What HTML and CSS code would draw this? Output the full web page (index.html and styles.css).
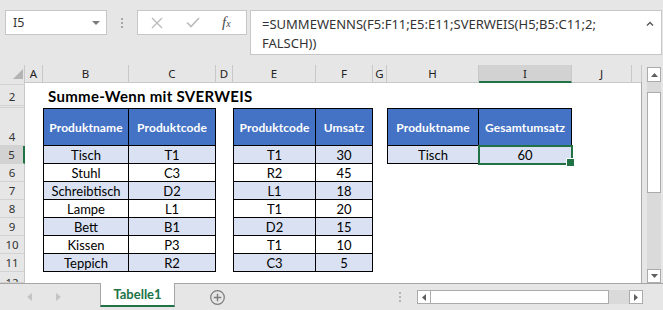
FILE: index.html
```html
<!DOCTYPE html>
<html lang="de">
<head>
<meta charset="utf-8">
<link rel="stylesheet" href="styles.css">
</head>
<body>
<div class="app">
  <header class="topbar">
    <div class="namebox">
      <span class="nb-text">I5</span>
      <svg class="nb-drop" width="8" height="4" viewBox="0 0 8 4"><path d="M0 0h8L4 4z" fill="#7a7a7a"/></svg>
    </div>
    <div class="grip"><i></i><i></i><i></i></div>
    <div class="fbtns">
      <svg class="fb-x" width="12" height="12" viewBox="0 0 12 12"><path d="M1 1L11 11M11 1L1 11" stroke="#bcbcbc" stroke-width="1.4" fill="none"/></svg>
      <svg class="fb-ok" width="14" height="11" viewBox="0 0 14 11"><path d="M1 5.5L5 9.5L13 1" stroke="#bcbcbc" stroke-width="1.6" fill="none"/></svg>
      <span class="fx"><i>f</i><i class="fx-x">x</i></span>
    </div>
    <div class="formula">
      <div class="ftext">=SUMMEWENNS(F5:F11;E5:E11;SVERWEIS(H5;B5:C11;2;<br>FALSCH))</div>
      <svg class="fcaret" width="8" height="5" viewBox="0 0 8 5"><path d="M1 4.5L4 1.5L7 4.5" stroke="#555" stroke-width="1.4" fill="none"/></svg>
    </div>
  </header>

  <div class="main">
    <div class="sheet">
      <div class="row r-h">
        <div class="ch corner"><svg width="25" height="17" viewBox="0 0 25 17"><path d="M13 14H23V4z" fill="#b4b4b4"/></svg></div>
        <div class="ch">A</div><div class="ch">B</div><div class="ch">C</div><div class="ch">D</div><div class="ch">E</div><div class="ch">F</div><div class="ch">G</div><div class="ch">H</div><div class="ch on">I</div><div class="ch">J</div><div class="ch"></div>
      </div>
      <div class="row r1">
        <div class="rh"></div><div></div><div></div><div></div><div></div><div></div><div></div><div></div><div></div><div></div><div></div><div></div>
      </div>
      <div class="row r2">
        <div class="rh">2</div><div></div><div class="title">Summe-Wenn mit SVERWEIS</div><div></div><div></div><div></div><div></div><div></div><div></div><div></div><div></div><div></div>
      </div>
      <div class="row r3">
        <div class="rh"></div><div></div><div></div><div></div><div></div><div></div><div></div><div></div><div></div><div></div><div></div><div></div>
      </div>
      <div class="row r4">
        <div class="rh">4</div><div></div>
        <div class="c h l">Produktname</div><div class="c h">Produktcode</div><div></div>
        <div class="c h l">Produktcode</div><div class="c h">Umsatz</div><div></div>
        <div class="c h l">Produktname</div><div class="c h">Gesamtumsatz</div><div></div><div></div>
      </div>
      <div class="row rd">
        <div class="rh on">5</div><div></div>
        <div class="c a l">Tisch</div><div class="c a">T1</div><div></div>
        <div class="c a l">T1</div><div class="c a">30</div><div></div>
        <div class="c a l">Tisch</div><div class="c a sel">60</div><div></div><div></div>
      </div>
      <div class="row rd">
        <div class="rh">6</div><div></div>
        <div class="c l">Stuhl</div><div class="c">C3</div><div></div>
        <div class="c l">R2</div><div class="c">45</div><div></div>
        <div></div><div></div><div></div><div></div>
      </div>
      <div class="row rd">
        <div class="rh">7</div><div></div>
        <div class="c a l">Schreibtisch</div><div class="c a">D2</div><div></div>
        <div class="c a l">L1</div><div class="c a">18</div><div></div>
        <div></div><div></div><div></div><div></div>
      </div>
      <div class="row rd">
        <div class="rh">8</div><div></div>
        <div class="c l">Lampe</div><div class="c">L1</div><div></div>
        <div class="c l">T1</div><div class="c">20</div><div></div>
        <div></div><div></div><div></div><div></div>
      </div>
      <div class="row rd">
        <div class="rh">9</div><div></div>
        <div class="c a l">Bett</div><div class="c a">B1</div><div></div>
        <div class="c a l">D2</div><div class="c a">15</div><div></div>
        <div></div><div></div><div></div><div></div>
      </div>
      <div class="row rd">
        <div class="rh">10</div><div></div>
        <div class="c l">Kissen</div><div class="c">P3</div><div></div>
        <div class="c l">T1</div><div class="c">10</div><div></div>
        <div></div><div></div><div></div><div></div>
      </div>
      <div class="row rd">
        <div class="rh">11</div><div></div>
        <div class="c a l">Teppich</div><div class="c a">R2</div><div></div>
        <div class="c a l">C3</div><div class="c a">5</div><div></div>
        <div></div><div></div><div></div><div></div>
      </div>
      <div class="row r12">
        <div class="rh top">12</div><div></div><div></div><div></div><div></div><div></div><div></div><div></div><div></div><div></div><div></div><div></div>
      </div>
    </div>

    <div class="vscroll">
      <div class="sb-btn up"><svg width="7" height="4" viewBox="0 0 7 4"><path d="M0 4h7L3.5 0z" fill="#5f5f5f"/></svg></div>
      <div class="sb-track"><div class="sb-thumb"></div></div>
      <div class="sb-btn down"><svg width="7" height="4" viewBox="0 0 7 4"><path d="M0 0h7L3.5 4z" fill="#5f5f5f"/></svg></div>
    </div>
  </div>

  <footer class="tabbar">
    <div class="nav">
      <svg class="nav-l" width="5" height="8" viewBox="0 0 5 8"><path d="M5 0V8L0 4z" fill="#c4c4c4"/></svg>
      <svg class="nav-r" width="5" height="8" viewBox="0 0 5 8"><path d="M0 0V8L5 4z" fill="#c4c4c4"/></svg>
    </div>
    <div class="tab">Tabelle1</div>
    <svg class="plus" width="15" height="15" viewBox="0 0 15 15"><circle cx="7.5" cy="7.5" r="6.8" fill="none" stroke="#7b7b7b" stroke-width="1.2"/><path d="M7.5 3.8V11.2M3.8 7.5H11.2" stroke="#7b7b7b" stroke-width="1.4"/></svg>
    <div class="grip tgrip"><i></i><i></i><i></i></div>
    <div class="hscroll">
      <div class="hb"><svg width="4" height="7" viewBox="0 0 4 7"><path d="M4 0V7L0 3.5z" fill="#5f5f5f"/></svg></div>
      <div class="hthumb"></div>
      <div class="htrack"></div>
      <div class="hb"><svg width="4" height="7" viewBox="0 0 4 7"><path d="M0 0V7L4 3.5z" fill="#5f5f5f"/></svg></div>
    </div>
  </footer>
</div>
</body>
</html>
```

FILE: styles.css
```css
* { box-sizing: border-box; margin: 0; padding: 0; }
html, body { width: 663px; height: 310px; overflow: hidden; }
body { background: #e6e6e6; font-family: Lato, "Liberation Sans", sans-serif; color: #000; }

.app { display: flex; flex-direction: column; width: 663px; height: 310px; }

/* top formula bar */
.topbar { height: 65px; display: flex; align-items: flex-start; padding-top: 10px; background: #e6e6e6; }
.namebox {
  margin-left: 5px; width: 102px; height: 25px; background: #fff; border: 1px solid #c6c6c6;
  display: flex; align-items: center; padding: 0 6px 0 7px;
  font: 12.5px "Noto Sans", sans-serif; color: #333;
}
.nb-text { flex: 1; }
.grip { margin-left: 14px; margin-top: 8px; display: flex; flex-direction: column; gap: 2px; }
.grip i { display: block; width: 2px; height: 2px; background: #a8a8a8; }
.fbtns {
  margin-left: 14px; width: 110px; height: 25px; background: #fff; border: 1px solid #c6c6c6;
  display: flex; align-items: center; padding-left: 13px;
}
.fb-ok { margin-left: 23px; }
.fx { margin-left: 22px; font-family: "Liberation Serif", serif; color: #4a4a4a; font-size: 15px; line-height: 1; }
.fx-x { font-size: 10px; }
.formula {
  margin-left: 3px; width: 412px; height: 45px; background: #fff; border: 1px solid #c6c6c6;
  display: flex; align-items: flex-start;
}
.ftext { flex: 1; padding: 4px 0 0 11px; font: 13px/19px "Noto Sans", sans-serif; color: #333; white-space: nowrap; }
.fcaret { margin: 10px 7px 0 0; }

/* sheet */
.main { display: flex; height: 218px; }
.sheet { width: 642px; background: #fff; display: flex; flex-direction: column; }
.row { display: grid; grid-template-columns: 25px 18px 86px 87px 17px 83px 57px 14px 92px 93px 60px 10px; }
.sheet .row:not(.r-h) > :last-child { border-right: 1px solid #a9a9a9; }
.r-h { height: 17px; }
.r1 { height: 3px; }
.r2 { height: 21px; }
.r3 { height: 2px; }
.r4 { height: 38px; }
.rd { height: 18px; }
.r12 { height: 11px; overflow: hidden; }

.ch {
  background: #e6e6e6; border-right: 1px solid #c8c8c8; border-bottom: 1px solid #c8c8c8;
  display: flex; align-items: center; justify-content: center;
  font: 11.5px "Noto Sans", sans-serif; color: #222;
}
.ch.on { background: #d2d2d2; border-bottom: 2px solid #217346; }
.corner { display: block; }
.corner svg { display: block; }

.rh {
  background: #e6e6e6; border-right: 1px solid #c8c8c8; border-bottom: 1px solid #d2d2d2;
  display: flex; align-items: flex-end; justify-content: center;
  font: 11.5px/16px "Noto Sans", sans-serif; color: #333; overflow: hidden;
}
.rh.on { background: #d2d2d2; border-right: 2px solid #217346; }
.rh.top { align-items: flex-start; padding-top: 3px; }

.title {
  font-weight: 700; font-size: 15px; line-height: 18px; white-space: nowrap; letter-spacing: 0.3px;
  display: flex; align-items: flex-end; padding: 0 0 1px 5px;
}

.c {
  display: flex; align-items: center; justify-content: center;
  font-size: 13px; color: #000; background: #fff;
  border-right: 1px solid #000; border-bottom: 1px solid #000;
}
.c.l { border-left: 1px solid #000; }
.c.h { background: #4472c4; color: #fff; font-weight: 700; font-size: 12px; letter-spacing: 0.1px; border-top: 1px solid #000; }
.c.a { background: #d9e1f2; }
.c.sel { position: relative; }
.c.sel::before {
  content: ""; position: absolute; left: -1px; top: -1px; right: -2px; bottom: -2px;
  border: 2px solid #217346; z-index: 1;
}
.c.sel::after {
  content: ""; position: absolute; right: -4px; bottom: -4px; width: 7px; height: 7px;
  background: #217346; border: 1px solid #fff; z-index: 2;
}

/* vertical scrollbar */
.vscroll { width: 21px; background: #e6e6e6; padding: 2px 2px 0 5px; display: flex; flex-direction: column; }
.sb-btn { background: #fff; border: 1px solid #ababab; display: flex; align-items: center; justify-content: center; }
.sb-btn svg { display: block; }
.sb-btn.up { height: 15px; }
.sb-btn.down { height: 14px; }
.sb-track { flex: 1; background: #dadada; padding-top: 10px; }
.sb-thumb { height: 101px; background: #fff; border: 1px solid #ababab; }

/* tab bar */
.tabbar { height: 27px; border-top: 1px solid #a6a6a6; display: flex; align-items: center; background: #e6e6e6; }
.nav { width: 100px; display: flex; align-items: center; }
.nav svg { display: block; }
.nav-l { margin-left: 27px; }
.nav-r { margin-left: 24px; }
.tab {
  align-self: flex-start; margin-top: -1px; width: 75px; height: 24px; background: #fff;
  border-left: 1px solid #a6a6a6; border-right: 1px solid #a6a6a6; border-bottom: 2px solid #217346;
  display: flex; align-items: center; justify-content: center;
  color: #217346; font-weight: 700; font-size: 13px;
}
.plus { display: block; margin-left: 35px; }
.tgrip { margin: 0 0 0 174px; }
.tgrip i { background: #b4b4b4; }
.hscroll { margin-left: 16px; width: 226px; height: 14px; display: flex; }
.hb { width: 14px; background: #fff; border: 1px solid #ababab; display: flex; align-items: center; justify-content: center; }
.hb svg { display: block; }
.hthumb { width: 178px; background: #fff; border: 1px solid #ababab; border-left: 0; }
.htrack { width: 20px; background: #dadada; }
```
